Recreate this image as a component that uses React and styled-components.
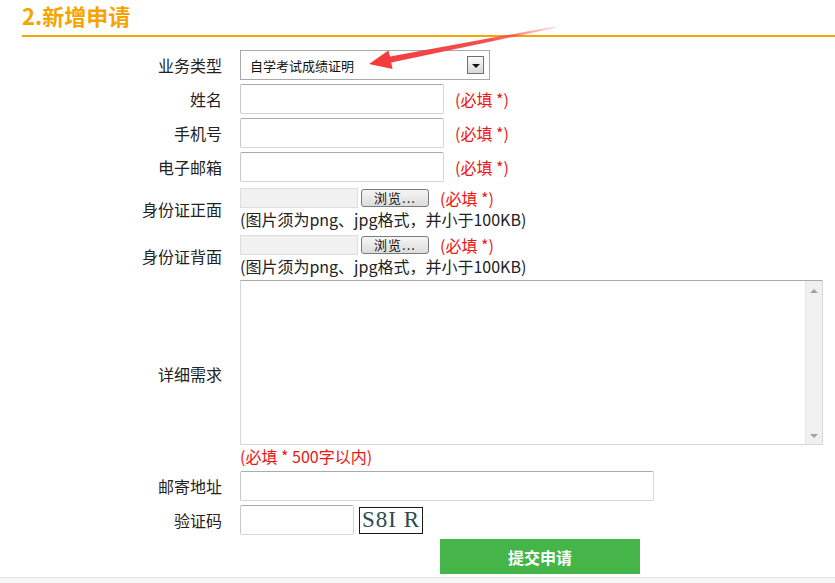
import styled, { createGlobalStyle } from 'styled-components'

const GlobalStyle = createGlobalStyle`
  html, body {
    margin: 0;
    padding: 0;
    background: #ffffff;
  }
  body {
    font-family: "Microsoft YaHei", "Noto Sans CJK SC", sans-serif;
    color: #222;
  }
`

const Page = styled.div`
  position: relative;
  width: 835px;
  height: 583px;
  overflow: hidden;
  display: flex;
  flex-direction: column;
`

const Header = styled.div`
  margin-left: 22px;
  border-bottom: 2px solid #f7a400;
  box-sizing: border-box;
  height: 37px;
  display: flex;
  align-items: flex-start;
`

const Title = styled.h2`
  margin: 0;
  font-size: 22px;
  line-height: 32px;
  margin-top: -1px;
  font-weight: bold;
  color: #f7a400;
`

const Form = styled.form`
  margin-top: 13px;
  display: flex;
  flex-direction: column;
  gap: 4px;
  flex: 1;
`

const Row = styled.div`
  display: flex;
  align-items: center;
  margin-top: ${(p) => p.$mt || 0}px;
`

const Label = styled.div`
  width: 222px;
  flex: none;
  text-align: right;
  font-size: 16px;
  line-height: 22px;
  color: #222;
`

const Field = styled.div`
  margin-left: 18px;
  display: flex;
  flex-direction: ${(p) => (p.$column ? 'column' : 'row')};
  align-items: ${(p) => (p.$column ? 'flex-start' : 'center')};
`

const SelectBox = styled.div`
  width: 250px;
  height: 30px;
  box-sizing: border-box;
  border: 1px solid #a9a9a9;
  display: flex;
  align-items: center;
  justify-content: space-between;
  padding: 0 5px 0 9px;
  font-size: 13px;
  color: #111;
`

const DropButton = styled.span`
  width: 17px;
  height: 18px;
  box-sizing: border-box;
  border: 1px solid #6f6f6f;
  background: linear-gradient(#fafafa, #d8d8d8);
  display: flex;
  align-items: center;
  justify-content: center;

  &::after {
    content: '';
    border-left: 4px solid transparent;
    border-right: 4px solid transparent;
    border-top: 4px solid #111;
    margin-top: 1px;
  }
`

const TextInput = styled.input`
  width: ${(p) => p.$w || 204}px;
  height: 30px;
  box-sizing: border-box;
  border: 1px solid #d6d6d6;
  border-top-color: #ababab;
  border-left-color: #c8c8c8;
  border-radius: 2px;
  padding: 0 4px;
  font-size: 14px;
  outline: none;
`

const Required = styled.span`
  margin-left: 11px;
  font-size: 16px;
  line-height: 20px;
  color: #f01414;
  white-space: nowrap;
`

const FileLine = styled.div`
  display: flex;
  align-items: center;
  height: 20px;
`

const FileBox = styled.div`
  width: 118px;
  height: 20px;
  box-sizing: border-box;
  background: #f1f1f1;
  border: 1px solid #dedede;
`

const BrowseButton = styled.button`
  margin-left: 3px;
  width: 68px;
  height: 18px;
  box-sizing: border-box;
  border: 1px solid #7a7a7a;
  border-radius: 3px;
  background: linear-gradient(#f6f6f6, #dcdcdc);
  font-family: "Microsoft YaHei", "Noto Sans CJK SC", sans-serif;
  font-size: 13px;
  line-height: 14px;
  padding: 0;
  color: #111;
  letter-spacing: 1px;
`

const Hint = styled.div`
  margin-top: 1px;
  font-size: 16px;
  line-height: 20px;
  color: #222;
  white-space: nowrap;
`

const AreaBox = styled.div`
  width: 583px;
  height: 165px;
  box-sizing: border-box;
  border: 1px solid #d6d6d6;
  border-top-color: #ababab;
  display: flex;
`

const Area = styled.textarea`
  flex: 1;
  border: none;
  resize: none;
  outline: none;
  padding: 4px;
  overflow: hidden;
`

const ScrollTrack = styled.div`
  width: 16px;
  background: #f0f0f0;
  border-left: 1px solid #e6e6e6;
  display: flex;
  flex-direction: column;
  justify-content: space-between;
  align-items: center;
  padding: 8px 0 6px;
`

const ScrollArrow = styled.span`
  border-left: 4px solid transparent;
  border-right: 4px solid transparent;
  ${(p) =>
    p.$up ? 'border-bottom: 4px solid #a3a3a3;' : 'border-top: 4px solid #a3a3a3;'}
`

const Note = styled.div`
  font-size: 16px;
  line-height: 22px;
  color: #f01414;
`

const Captcha = styled.div`
  margin-left: 5px;
  width: 64px;
  height: 27px;
  box-sizing: border-box;
  border: 1px solid #1a1a1a;
  display: flex;
  align-items: center;
  justify-content: center;
  font-family: "Liberation Serif", serif;
  font-size: 23px;
  letter-spacing: 1px;
  color: #2d4b4b;
`

const Submit = styled.button`
  margin-left: 440px;
  width: 200px;
  height: 35px;
  border: none;
  background: #45b54a;
  color: #fff;
  font-family: "Microsoft YaHei", "Noto Sans CJK SC", sans-serif;
  font-size: 16px;
  font-weight: bold;
  padding: 0;
`

const Footer = styled.div`
  height: 5px;
  border-top: 1px solid #e2e2e2;
  background: #f6f6f6;
`

const ArrowMark = styled.svg`
  position: absolute;
  left: 0;
  top: 0;
  pointer-events: none;
`

function FileRow({ label, mt }) {
  return (
    <Row $mt={mt}>
      <Label>{label}</Label>
      <Field $column>
        <FileLine>
          <FileBox />
          <BrowseButton type="button">浏览...</BrowseButton>
          <Required>(必填 *)</Required>
        </FileLine>
        <Hint>(图片须为png、jpg格式，并小于100KB)</Hint>
      </Field>
    </Row>
  )
}

function RequiredRow({ label }) {
  return (
    <Row>
      <Label>{label}</Label>
      <Field>
        <TextInput />
        <Required>(必填 *)</Required>
      </Field>
    </Row>
  )
}

function App() {
  return (
    <Page>
      <GlobalStyle />
      <Header>
        <Title>2.新增申请</Title>
      </Header>
      <Form onSubmit={(e) => e.preventDefault()}>
        <Row>
          <Label>业务类型</Label>
          <Field>
            <SelectBox>
              <span>自学考试成绩证明</span>
              <DropButton />
            </SelectBox>
          </Field>
        </Row>
        <RequiredRow label="姓名" />
        <RequiredRow label="手机号" />
        <RequiredRow label="电子邮箱" />
        <FileRow label="身份证正面" mt={2} />
        <FileRow label="身份证背面" mt={2} />
        <Row>
          <Label>详细需求</Label>
          <Field $column>
            <AreaBox>
              <Area />
              <ScrollTrack>
                <ScrollArrow $up />
                <ScrollArrow />
              </ScrollTrack>
            </AreaBox>
            <Note>(必填 * 500字以内)</Note>
          </Field>
        </Row>
        <Row>
          <Label>邮寄地址</Label>
          <Field>
            <TextInput $w={414} />
          </Field>
        </Row>
        <Row>
          <Label>验证码</Label>
          <Field>
            <TextInput $w={114} />
            <Captcha>S8I R</Captcha>
          </Field>
        </Row>
        <Row>
          <Submit type="submit">提交申请</Submit>
        </Row>
      </Form>
      <Footer />
      <ArrowMark width="835" height="100" viewBox="0 0 835 100">
        <defs>
          <linearGradient id="arrowFade" x1="556" y1="27" x2="369" y2="64" gradientUnits="userSpaceOnUse">
            <stop offset="0" stopColor="#f33b3b" stopOpacity="0.15" />
            <stop offset="0.35" stopColor="#f33b3b" stopOpacity="0.9" />
            <stop offset="1" stopColor="#f33b3b" />
          </linearGradient>
        </defs>
        <polygon
          points="369,64 392.6,69 391.2,62.6 556,27.8 555.6,26.2 390,56.6 388.4,50.6"
          fill="url(#arrowFade)"
        />
      </ArrowMark>
    </Page>
  )
}

export default App
